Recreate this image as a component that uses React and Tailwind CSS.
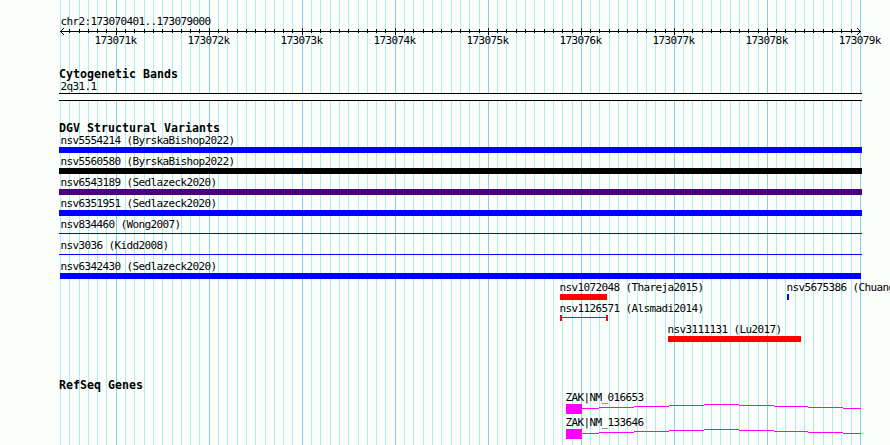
const START = 173070401;
const SCALE = 800 / 8600;
const LEFT = 60;

const toX = (bp) => Math.round(LEFT + (bp - START) * SCALE);

const gridlines = Array.from({ length: 87 }, (_, i) => {
    const bp = 173070400 + i * 100;
    return { x: toX(bp), major: bp % 1000 === 0 };
});

const kilobases = [173071, 173072, 173073, 173074, 173075, 173076, 173077, 173078, 173079];

const variantRows = [
    [{ name: 'nsv5554214 (ByrskaBishop2022)', labelX: 60.5, x: 59, width: 803, color: 'bg-[#0000ff]' }],
    [{ name: 'nsv5560580 (ByrskaBishop2022)', labelX: 60.5, x: 59, width: 803, color: 'bg-black' }],
    [{ name: 'nsv6543189 (Sedlazeck2020)', labelX: 60.5, x: 59, width: 803, color: 'bg-[#4b0082]' }],
    [{ name: 'nsv6351951 (Sedlazeck2020)', labelX: 60.5, x: 59, width: 803, color: 'bg-[#0000ff]' }],
    [{ name: 'nsv834460 (Wong2007)', labelX: 60.5, x: 59, width: 803, color: 'bg-[#0000ff]', kind: 'thin' }],
    [{ name: 'nsv3036 (Kidd2008)', labelX: 60.5, x: 59, width: 803, color: 'bg-[#0000ff]', kind: 'thin' }],
    [{ name: 'nsv6342430 (Sedlazeck2020)', labelX: 60.5, x: 60, width: 801, color: 'bg-[#0000ff]' }],
    [
        { name: 'nsv1072048 (Thareja2015)', labelX: 559.5, x: 560, width: 47, color: 'bg-[#ff0000]' },
        { name: 'nsv5675386 (Chuang2014)', labelX: 786.5, x: 787, width: 2, color: 'bg-[#0000ff]' },
    ],
    [{ name: 'nsv1126571 (Alsmadi2014)', labelX: 559.5, x: 560, width: 48, color: 'bg-[#ff0000]', kind: 'span' }],
    [{ name: 'nsv3111131 (Lu2017)', labelX: 667.5, x: 668, width: 133, color: 'bg-[#ff0000]' }],
];

const genes = ['ZAK|NM_016653', 'ZAK|NM_133646'];

// [start, end, y] of each step of the intron line
const intron = [
    [582, 599, 4], [599, 634, 3], [634, 669, 2], [669, 704, 1], [704, 739, 0],
    [739, 774, 1], [774, 808, 2], [808, 843, 3], [843, 861, 4],
];

function Grid() {
    return (
        <svg className="absolute inset-0" width="890" height="445" shapeRendering="crispEdges">
            {gridlines.map(({ x, major }) => (
                <rect key={x} x={x} y="0" width="1" height="445" fill={major ? '#87ceeb' : '#afeeee'} />
            ))}
        </svg>
    );
}

function Ruler() {
    return (
        <svg className="block" width="890" height="7" shapeRendering="crispEdges">
            <rect x="60" y="3" width="801" height="1" />
            {gridlines.slice(1, -1).map(({ x, major }) => (
                <rect key={x} x={x} y={major ? 0 : 1} width="1" height={major ? 7 : 4} />
            ))}
            {[1, 2, 3].map((d) => (
                <g key={d}>
                    <rect x={60 + d} y={3 - d} width="1" height="1" />
                    <rect x={60 + d} y={3 + d} width="1" height="1" />
                    <rect x={860 - d} y={3 - d} width="1" height="1" />
                    <rect x={860 - d} y={3 + d} width="1" height="1" />
                </g>
            ))}
        </svg>
    );
}

function TrackTitle({ children }) {
    return (
        <h2 className="h-3 pl-[59px] text-[11.6px] leading-[13px] font-bold tracking-[0.016px]">
            {children}
        </h2>
    );
}

function Glyph({ width, color, kind }) {
    if (kind === 'thin') {
        return (
            <div className="h-1.5 pt-0.5" style={{ width }}>
                <div className={`h-px ${color}`} />
            </div>
        );
    }
    if (kind === 'span') {
        return (
            <div className="flex h-1.5" style={{ width }}>
                <div className={`w-0.5 ${color}`} />
                <div className={`mt-0.5 h-px flex-1 ${color}`} />
                <div className={`w-0.5 ${color}`} />
            </div>
        );
    }
    return <div className={`h-1.5 ${color}`} style={{ width }} />;
}

function VariantRow({ items }) {
    return (
        <div className="grid h-[21px]">
            {items.map((item) => (
                <div key={item.name} className="col-start-1 row-start-1">
                    <div className="h-[13px]" style={{ paddingLeft: item.labelX }}>{item.name}</div>
                    <div style={{ paddingLeft: item.x }}>
                        <Glyph {...item} />
                    </div>
                </div>
            ))}
        </div>
    );
}

function Gene({ name }) {
    return (
        <div className="h-[25px]">
            <div className="h-[13px] pl-[565.5px]">{name}</div>
            <svg className="block" width="890" height="10" fill="#ff00ff" shapeRendering="crispEdges">
                <rect x="566" y="0" width="16" height="10" />
                {intron.map(([from, to, y]) => (
                    <rect key={from} x={from} y={y} width={to - from} height="1" />
                ))}
            </svg>
        </div>
    );
}

function App() {
    return (
        <div className="relative h-[445px] w-[890px] overflow-hidden bg-[#fcfefc] font-['DejaVu_Sans_Mono',monospace] text-[11px] leading-[13px] tracking-[-0.622px] whitespace-pre text-black">
            <Grid />
            <div className="relative">
                <header className="h-[68px] pt-[15px]">
                    <div className="h-[13px] pl-[60.5px]">chr2:173070401..173079000</div>
                    <Ruler />
                    <div className="-mt-px flex gap-[51px] pl-[94.5px]">
                        {kilobases.map((kb) => (
                            <span key={kb} className="w-[42.02px] shrink-0">{kb}k</span>
                        ))}
                    </div>
                </header>

                <section className="h-[54px]">
                    <TrackTitle>Cytogenetic Bands</TrackTitle>
                    <div className="h-[13px] pl-[60.5px]">2q31.1</div>
                    <div className="ml-[59px] h-2 w-[803px] border-y border-black bg-[#fcfefc]" />
                </section>

                <section className="h-[257px]">
                    <TrackTitle>DGV Structural Variants</TrackTitle>
                    {variantRows.map((items) => (
                        <VariantRow key={items[0].name} items={items} />
                    ))}
                </section>

                <section>
                    <TrackTitle>RefSeq Genes</TrackTitle>
                    {genes.map((name) => (
                        <Gene key={name} name={name} />
                    ))}
                </section>
            </div>
        </div>
    );
}

export default App;
